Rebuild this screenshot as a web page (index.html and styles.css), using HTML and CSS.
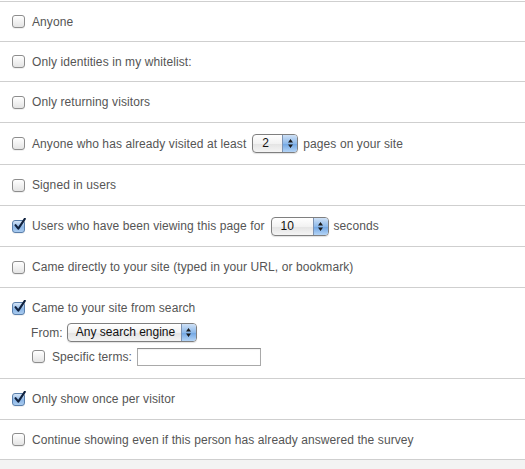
FILE: index.html
```html
<!DOCTYPE html>
<html>
<head>
<meta charset="utf-8">
<link rel="stylesheet" href="styles.css">
</head>
<body>
<div class="list">
  <div class="row short"><span class="cb"></span><span>Anyone</span></div>
  <div class="row short"><span class="cb"></span><span>Only identities in my whitelist:</span></div>
  <div class="row"><span class="cb"></span><span>Only returning visitors</span></div>
  <div class="row tall"><span class="cb"></span><span>Anyone who has already visited at least</span>
    <span class="sel sel-pages"><span class="sel-val">2</span><span class="sel-btn"><svg width="7" height="11" viewBox="0 0 7 11"><path d="M3.5 1 L6 4.5 H1 Z M3.5 10 L6 6.5 H1 Z" fill="#1a1a1a"/></svg></span></span>
    <span>pages on your site</span></div>
  <div class="row"><span class="cb"></span><span>Signed in users</span></div>
  <div class="row"><span class="cb checked"><svg class="tick" width="14" height="14" viewBox="0 0 14 14"><path d="M2.5 7.2 L5.3 10.6 L11.8 0.8" fill="none" stroke="#10223f" stroke-width="2.1" stroke-linecap="round" stroke-linejoin="round"/></svg></span><span>Users who have been viewing this page for</span>
    <span class="sel sel-secs"><span class="sel-val">10</span><span class="sel-btn"><svg width="7" height="11" viewBox="0 0 7 11"><path d="M3.5 1 L6 4.5 H1 Z M3.5 10 L6 6.5 H1 Z" fill="#1a1a1a"/></svg></span></span>
    <span>seconds</span></div>
  <div class="row"><span class="cb"></span><span>Came directly to your site (typed in your URL, or bookmark)</span></div>
  <div class="row row-search">
    <div class="line"><span class="cb checked"><svg class="tick" width="14" height="14" viewBox="0 0 14 14"><path d="M2.5 7.2 L5.3 10.6 L11.8 0.8" fill="none" stroke="#10223f" stroke-width="2.1" stroke-linecap="round" stroke-linejoin="round"/></svg></span><span>Came to your site from search</span></div>
    <div class="sub">
      <div class="sub-line"><span class="from">From:</span>
        <span class="sel sel-engine"><span class="sel-val">Any search engine</span><span class="sel-btn"><svg width="7" height="11" viewBox="0 0 7 11"><path d="M3.5 1 L6 4.5 H1 Z M3.5 10 L6 6.5 H1 Z" fill="#1a1a1a"/></svg></span></span>
      </div>
      <div class="sub-line terms"><span class="cb"></span><span>Specific terms:</span><span class="textbox"></span></div>
    </div>
  </div>
  <div class="row"><span class="cb checked"><svg class="tick" width="14" height="14" viewBox="0 0 14 14"><path d="M2.5 7.2 L5.3 10.6 L11.8 0.8" fill="none" stroke="#10223f" stroke-width="2.1" stroke-linecap="round" stroke-linejoin="round"/></svg></span><span>Only show once per visitor</span></div>
  <div class="row"><span class="cb"></span><span>Continue showing even if this person has already answered the survey</span></div>
</div>
</body>
</html>
```

FILE: styles.css
```css
html, body {
  margin: 0;
  padding: 0;
  background: #f3f3f3;
  height: 100%;
}
body {
  font-family: "Liberation Sans", Arial, sans-serif;
  font-size: 12px;
  letter-spacing: 0.09px;
  color: #555;
}
.list {
  background: #fff;
  padding-top: 1px;
}
.row {
  border-top: 1px solid #cfcfcf;
  height: 40px;
  box-sizing: content-box;
  display: flex;
  align-items: center;
  padding: 0 12px;
  line-height: 16px;
  white-space: nowrap;
}
.row.short { height: 39px; }
.row.tall { height: 41px; }
.row:last-child {
  border-bottom: 1px solid #cfcfcf;
  height: 39px;
}
.cb {
  position: relative;
  flex: none;
  width: 11px;
  height: 11px;
  border: 1px solid #8d8d8d;
  border-radius: 3px;
  background: linear-gradient(#ffffff, #e4e4e4);
  margin-right: 7px;
  box-shadow: 0 1px 0 rgba(0,0,0,0.06);
}
.cb.checked {
  border-color: #5a7fab;
  background: linear-gradient(#d6e6f8, #8cb6e6 55%, #a9cbef);
}
.tick {
  position: absolute;
  left: 0;
  top: -3px;
}
.sel {
  position: relative;
  display: inline-flex;
  align-items: stretch;
  height: 17px;
  border: 1px solid #7f7f7f;
  border-radius: 4px;
  background: linear-gradient(#ffffff, #f2f2f2 50%, #e3e3e3 51%, #f4f4f4);
  box-shadow: 0 1px 1px rgba(0,0,0,0.12);
  font-family: "Liberation Sans", Arial, sans-serif;
  font-size: 12px;
  letter-spacing: 0;
  color: #111;
  overflow: hidden;
  margin: 0 5px 0 6px;
}
.sel-val {
  flex: 1;
  padding-left: 9px;
  line-height: 17px;
}
.sel-btn {
  flex: none;
  width: 14px;
  border-left: 1px solid #7d93b3;
  background: linear-gradient(#cfe1f6, #8db9ea 50%, #6ea4e2 51%, #b4d4f6);
  display: flex;
  align-items: center;
  justify-content: center;
}
.sel-pages { width: 44px; }
.sel-secs { width: 56px; }
.row-search {
  height: auto;
  display: block;
  padding-top: 12px;
  padding-bottom: 12px;
}
.row-search .line {
  display: flex;
  align-items: center;
  height: 16px;
}
.sub {
  padding-left: 19px;
  margin-top: 7px;
}
.sub-line {
  display: flex;
  align-items: center;
  height: 19px;
}
.sub-line.terms {
  margin-top: 5px;
  padding-left: 1px;
}
.sel-engine {
  width: 128px;
  margin-left: 4px;
}
.sel-engine .sel-val { padding-left: 8px; }
.textbox {
  display: inline-block;
  width: 122px;
  height: 16px;
  border: 1px solid #a9a9a9;
  border-top-color: #8e8e8e;
  background: #fff;
  margin-left: 5px;
  box-shadow: inset 0 1px 1px rgba(0,0,0,0.06);
}
```
